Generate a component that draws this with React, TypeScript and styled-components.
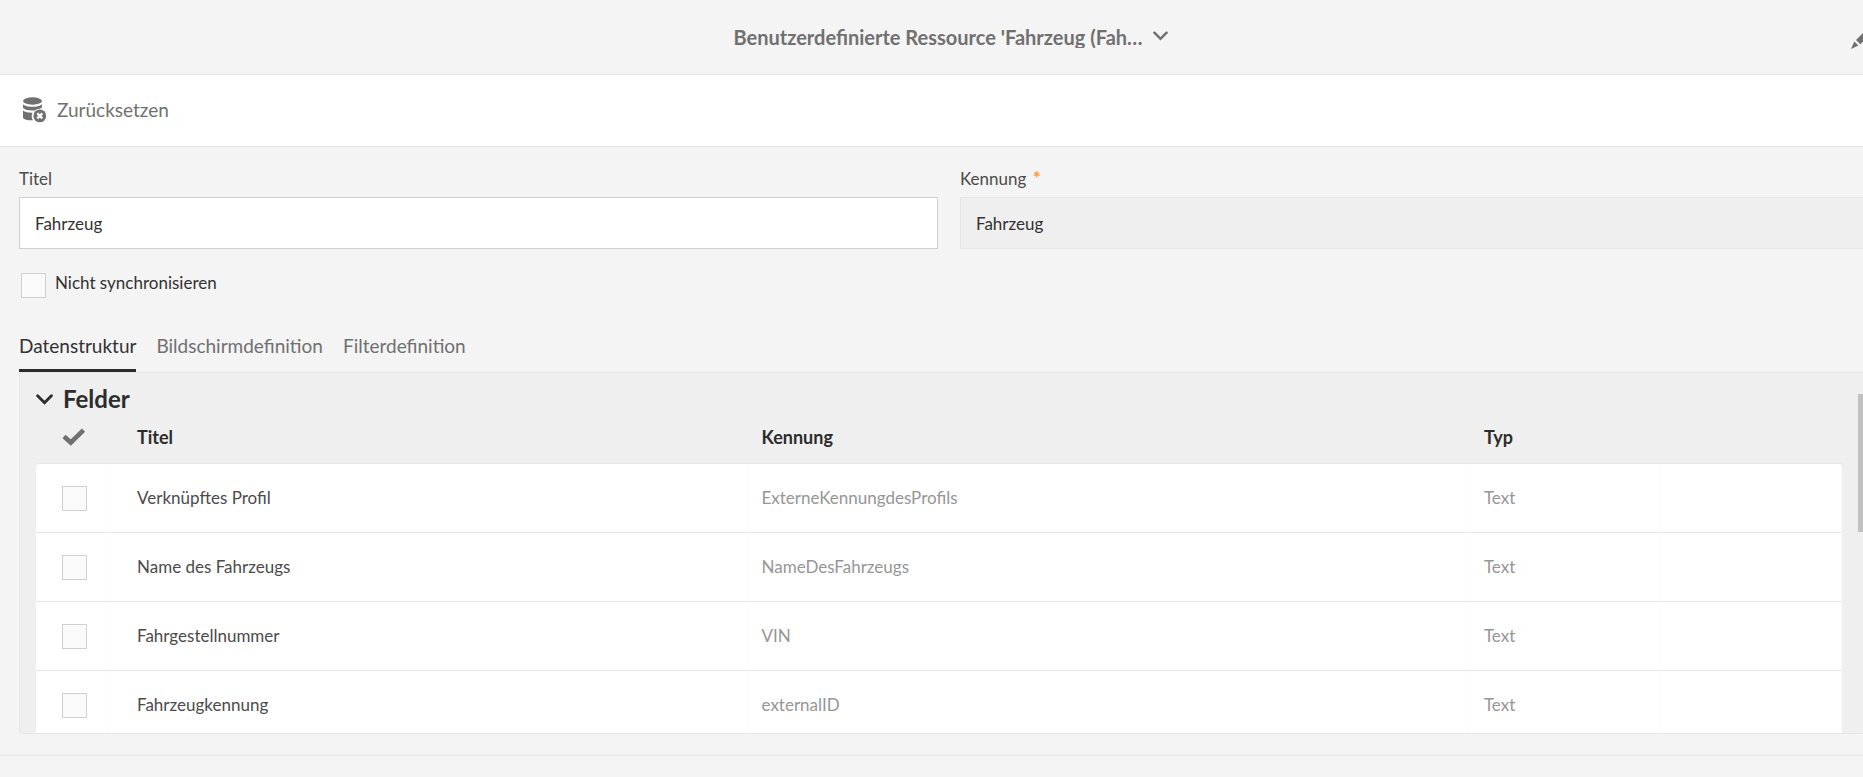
import React, { useState } from 'react';
import styled, { createGlobalStyle } from 'styled-components';

const GlobalStyle = createGlobalStyle`
  *, *::before, *::after { box-sizing: border-box; }
  body {
    margin: 0;
    background: #f4f4f4;
    color: #4b4b4b;
    font: 17px/24px Lato, "Liberation Sans", sans-serif;
  }
  button, input { font: inherit; color: inherit; }
`;

const Viewport = styled.div`
  height: 100vh;
  overflow: hidden;
`;

/* The page runs a little past the right edge of the window. */
const Page = styled.div`
  display: flex;
  flex-direction: column;
  width: calc(100% + 38px);
  height: 100%;
`;

const PlainButton = styled.button`
  display: flex;
  align-items: center;
  padding: 0;
  border: 0;
  background: none;
  cursor: pointer;
`;

const TopBar = styled.header`
  display: grid;
  grid-template-columns: 1fr auto 1fr;
  align-items: center;
  height: 75px;
  padding: 0 26px;
  border-bottom: 1px solid #e6e6e6;
  color: #707070;
`;

const TitleButton = styled(PlainButton)`
  grid-column: 2;
  align-items: flex-start;
  gap: 10px;
  font-size: 20px;
  font-weight: 700;
  line-height: 22px;

  svg { margin-top: 5px; }
`;

const TitleText = styled.span`
  overflow: hidden;
`;

const EditButton = styled(PlainButton)`
  justify-self: end;
`;

const Toolbar = styled.div`
  display: flex;
  height: 72px;
  padding: 0 22px;
  border-bottom: 1px solid #e6e6e6;
  background: #fff;
`;

const ToolButton = styled(PlainButton)`
  gap: 10px;
  padding-bottom: 2px;
  font-size: 19px;
  color: #707070;
`;

const Content = styled.main`
  display: flex;
  flex: 1;
  flex-direction: column;
  min-height: 0;
  padding: 20px 22px 21px 19px;
`;

const Fields = styled.div`
  display: grid;
  grid-template-columns: 1fr 1fr;
  gap: 22px;
`;

const Field = styled.div`
  display: flex;
  flex-direction: column;
  gap: 6px;
`;

const Required = styled.span`
  padding-left: 2px;
  font-size: 19px;
  font-weight: 700;
  line-height: 20px;
  color: #ff9a3c;
`;

const TextInput = styled.input`
  height: 52px;
  padding: 0 15px;
  border: 1px solid #d0d0d0;
  background: #fff;
  color: #323232;
  outline: 0;
  &:read-only { border-color: #e6e6e6; background: #efefef; }
`;

const CheckRow = styled.div`
  display: flex;
  gap: 9px;
  padding: 24px 2px 0;
  line-height: 20px;
  color: #323232;
`;

const Check = styled.input`
  appearance: none;
  display: block;
  width: 25px;
  height: 25px;
  margin: 0;
  border: 1px solid #d0d0d0;
  background: #fafafa;
  &:checked { background: #707070; }
`;

const Tabs = styled.div`
  display: flex;
  gap: 20px;
  padding-top: 24px;
`;

const Tab = styled.button<{ $active: boolean }>`
  height: 50px;
  padding: 0;
  border: 0;
  border-bottom: 3px solid ${(p) => (p.$active ? '#2c2c2c' : 'transparent')};
  background: none;
  font-size: 19px;
  color: ${(p) => (p.$active ? '#323232' : '#707070')};
  cursor: pointer;
`;

const Panel = styled.section`
  display: flex;
  flex: 1;
  min-height: 0;
  overflow: hidden;
  border: 1px solid #e6e6e6;
  border-radius: 0 0 4px 4px;
  background: #efefef;
`;

const PanelBody = styled.div`
  flex: 1;
  padding: 8px 16px 0;
`;

const ScrollTrack = styled.div`
  width: 20px;
  padding-top: 21px;
  background: #f0f0f0;
`;

const ScrollThumb = styled.div`
  height: 138px;
  background: #c1c1c1;
`;

const SectionTitle = styled.h2`
  height: 38px;
  margin: 0;
  font-size: 24px;
  color: #2c2c2c;
`;

const SectionToggle = styled(PlainButton)`
  gap: 10px;
  height: 36px;
`;

const Table = styled.table`
  width: 100%;
  table-layout: fixed;
  border-collapse: separate;
  border-spacing: 0;
`;

const Col = styled.col<{ $width?: string }>`
  width: ${(p) => p.$width ?? 'auto'};
`;

const HeadCell = styled.th<{ $indent: number }>`
  height: 45px;
  padding: 0 0 8px ${(p) => p.$indent}px;
  border-bottom: 1px solid #e6e6e6;
  text-align: left;
  font-size: 18px;
  color: #2c2c2c;
`;

const Cell = styled.td<{ $indent: number; $muted?: boolean }>`
  height: 69px;
  padding: 0 0 0 ${(p) => p.$indent}px;
  border-right: 1px solid #fafafa;
  border-bottom: 1px solid #e6e6e6;
  background: #fff;
  color: ${(p) => (p.$muted ? '#969696' : '#4b4b4b')};
  tr:first-child > &:first-child { border-top-left-radius: 4px; }
  tr:first-child > &:last-child { border-top-right-radius: 4px; }
`;

const Footer = styled.footer`
  height: 22px;
  border-top: 1px solid #e6e6e6;
`;

const Svg = styled.svg`
  display: block;
  flex: none;
`;

const Chevron = ({ width, height }: { width: number; height: number }) => (
  <Svg width={width} height={height} viewBox="0 0 16 10" fill="none" stroke="currentColor" strokeWidth="2.7" strokeLinecap="round">
    <path d="M1.5 1.500 8 8 14.500 1.500" />
  </Svg>
);

const DatabaseResetIcon = () => (
  <Svg width="25" height="26" viewBox="0 0 25 26" fill="currentColor">
    <ellipse cx="10.5" cy="4" rx="9.5" ry="3.7" />
    <path d="M1 7.2c2 1.9 5.500 2.600 9.500 2.600s7.500-.7 9.500-2.600v3.300c-1 .8-2.200 1.200-3.800 1.400-1.400.3-2.500.8-3.500 1.500-4.700.4-9.700-.3-11.700-2.400z" />
    <path d="M1 13.600c2 1.600 5.200 2.300 9.500 2.200-.5 1-.8 2-.8 3.200 0 1.600.5 3 1.300 4.200-4.500.3-8.500-.4-10-2.300z" />
    <circle cx="17.800" cy="18.900" r="6.400" />
    <path d="m15.300 16.400 5 5m0-5-5 5" stroke="#fff" strokeWidth="2.200" />
  </Svg>
);

const PencilIcon = () => (
  <Svg width="24" height="24" viewBox="0 0 24 24" fill="currentColor">
    <path d="M0 24 3.300 16.500 7.400 20.500z" />
    <path d="M5 15 18 2l4.500 4.500L9.300 19.300z" />
  </Svg>
);

const CheckIcon = () => (
  <Svg width="24" height="18" viewBox="0 0 24 18" fill="none" stroke="currentColor" strokeWidth="4.600">
    <path d="M2 8.500 8.800 14.500 21.500 2.200" />
  </Svg>
);

const HeadIcon = styled.span`
  color: #707070;
`;

const rows = [
  { title: 'Verknüpftes Profil', id: 'ExterneKennungdesProfils', type: 'Text' },
  { title: 'Name des Fahrzeugs', id: 'NameDesFahrzeugs', type: 'Text' },
  { title: 'Fahrgestellnummer', id: 'VIN', type: 'Text' },
  { title: 'Fahrzeugkennung', id: 'externalID', type: 'Text' },
];

const tabs = ['Datenstruktur', 'Bildschirmdefinition', 'Filterdefinition'];

export default function App() {
  const [tab, setTab] = useState(tabs[0]);

  return (
    <Viewport>
      <GlobalStyle />
      <Page>
        <TopBar>
          <TitleButton>
            <TitleText>Benutzerdefinierte Ressource 'Fahrzeug (Fah…</TitleText>
            <Chevron width={15} height={10} />
          </TitleButton>
          <EditButton aria-label="Bearbeiten">
            <PencilIcon />
          </EditButton>
        </TopBar>
        <Toolbar>
          <ToolButton>
            <DatabaseResetIcon />
            Zurücksetzen
          </ToolButton>
        </Toolbar>
        <Content>
          <Fields>
            <Field>
              <label htmlFor="title">Titel</label>
              <TextInput id="title" defaultValue="Fahrzeug" />
            </Field>
            <Field>
              <label htmlFor="identifier">
                Kennung <Required>*</Required>
              </label>
              <TextInput id="identifier" value="Fahrzeug" readOnly />
            </Field>
          </Fields>
          <CheckRow>
            <Check type="checkbox" id="no-sync" />
            <label htmlFor="no-sync">Nicht synchronisieren</label>
          </CheckRow>
          <Tabs role="tablist">
            {tabs.map((name) => (
              <Tab key={name} role="tab" aria-selected={name === tab} $active={name === tab} onClick={() => setTab(name)}>
                {name}
              </Tab>
            ))}
          </Tabs>
          <Panel>
            <PanelBody>
              <SectionTitle>
                <SectionToggle aria-expanded="true">
                  <Chevron width={17} height={11} />
                  Felder
                </SectionToggle>
              </SectionTitle>
              <Table>
                <colgroup>
                  <Col $width="74px" />
                  <Col $width="35.300%" />
                  <Col $width="40%" />
                  <Col $width="10.600%" />
                  <Col />
                </colgroup>
                <thead>
                  <tr>
                    <HeadCell $indent={26} aria-label="Auswahl">
                      <HeadIcon>
                        <CheckIcon />
                      </HeadIcon>
                    </HeadCell>
                    <HeadCell $indent={27}>Titel</HeadCell>
                    <HeadCell $indent={14}>Kennung</HeadCell>
                    <HeadCell $indent={14}>Typ</HeadCell>
                    <HeadCell $indent={0} aria-label="Aktionen" />
                  </tr>
                </thead>
                <tbody>
                  {rows.map((row) => (
                    <tr key={row.id}>
                      <Cell $indent={26}>
                        <Check type="checkbox" aria-label={row.title} />
                      </Cell>
                      <Cell $indent={27}>{row.title}</Cell>
                      <Cell $indent={14} $muted>{row.id}</Cell>
                      <Cell $indent={14} $muted>{row.type}</Cell>
                      <Cell $indent={0} />
                    </tr>
                  ))}
                </tbody>
              </Table>
            </PanelBody>
            <ScrollTrack>
              <ScrollThumb />
            </ScrollTrack>
          </Panel>
        </Content>
        <Footer />
      </Page>
    </Viewport>
  );
}
